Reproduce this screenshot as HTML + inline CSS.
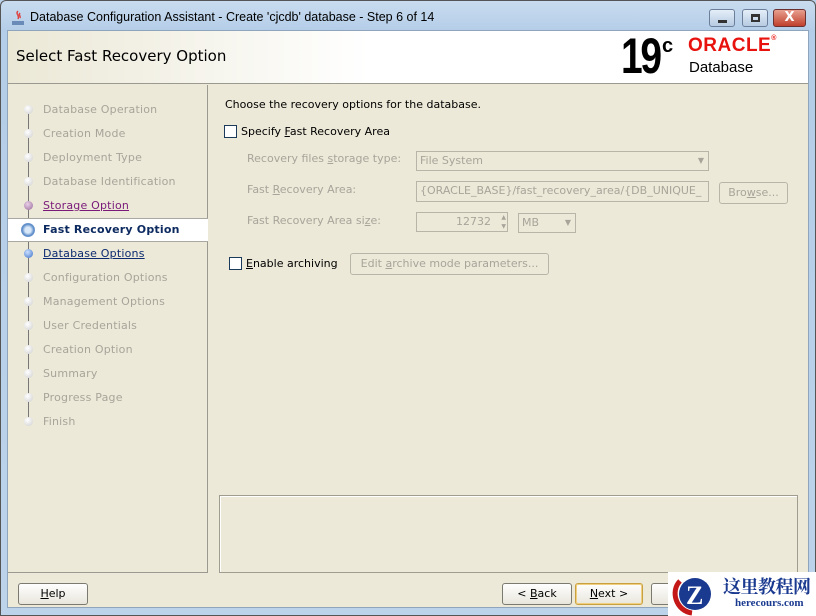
<!DOCTYPE html>
<html><head><meta charset="utf-8"><style>
*{margin:0;padding:0;box-sizing:border-box}
body{width:816px;height:616px;overflow:hidden;background:#b9d1ea;font-family:"DejaVu Sans","Liberation Sans",sans-serif;font-size:11px;position:relative}
.abs{position:absolute}
#frame{left:0;top:0;width:816px;height:616px;background:linear-gradient(#c9dcef,#b4cde8 30px,#bcd3ea);border:1px solid #555;border-radius:6px 6px 0 0}
#title{left:30px;top:10px;font-family:"Liberation Sans",sans-serif;font-size:12.5px;color:#000}
#client{left:7px;top:30px;width:802px;height:578px;background:#ece9d8;border:1px solid #8fa5bd}
#hdr{left:0;top:0;width:800px;height:53px;background:linear-gradient(90deg,#ebe8d6,#fff 45%);border-bottom:1px solid #9a9a90}
.st{position:absolute;left:35px;font-size:11px;color:#a8a49a;letter-spacing:.2px}
.dot{position:absolute;left:16px;width:9px;height:9px;border-radius:50%;background:radial-gradient(circle at 40% 35%,#fff,#ddd 70%,#bbb)}
.btn{position:absolute;height:22px;border:1px solid #7a7a70;border-radius:3px;background:linear-gradient(#fefefe,#e8e6dc);font-size:11px;text-align:center;line-height:20px;color:#000}
.dis{color:#a8a49a}
.box{position:absolute;border:1px solid #b8b5a8;background:#ece9d8;color:#a8a49a;font-size:11px;line-height:18px;padding-left:3px}
.cb{position:absolute;width:13px;height:13px;border:1px solid #1c3a5a;background:#fff}
</style></head><body>
<div id="frame" class="abs"></div>
<svg class="abs" style="left:10px;top:10px" width="16" height="16"><rect x="2" y="11" width="12" height="4" fill="#6a8ab8"/><path d="M8 1c-3 3 2 4 0 8M10 3c-2 2 1 3 0 5" stroke="#d44" fill="none" stroke-width="1.5"/></svg>
<div id="title" class="abs">Database Configuration Assistant - Create 'cjcdb' database - Step 6 of 14</div>
<div class="abs" style="left:709px;top:9px;width:26px;height:18px;border:1px solid #6b7f9b;border-radius:3px;background:linear-gradient(#e4eef8,#b7cbe2)"><div style="position:absolute;left:8px;top:10px;width:9px;height:3px;background:#333"></div></div>
<div class="abs" style="left:742px;top:9px;width:26px;height:18px;border:1px solid #6b7f9b;border-radius:3px;background:linear-gradient(#e4eef8,#b7cbe2)"><div style="position:absolute;left:8px;top:4px;width:9px;height:8px;border:2px solid #333;border-top-width:3px"></div></div>
<div class="abs" style="left:773px;top:9px;width:33px;height:18px;border:1px solid #6b3030;border-radius:3px;background:linear-gradient(#e8a090,#c0402c);color:#fff;font-weight:bold;text-align:center;line-height:16px;font-size:13px">X</div>
<div id="client" class="abs">
 <div id="hdr" class="abs">
  <div class="abs" style="left:8px;top:16px;font-size:15px;color:#000">Select Fast Recovery Option</div>
  <div class="abs" style="left:613px;top:-4px;font-family:'Liberation Sans',sans-serif;font-weight:bold;font-size:50px;letter-spacing:-3px;color:#000;transform:scaleX(.78);transform-origin:left">19</div>
  <div class="abs" style="left:654px;top:4px;font-family:'Liberation Sans',sans-serif;font-weight:bold;font-size:20px;color:#000">c</div>
  <div class="abs" style="left:680px;top:4px;font-family:'Liberation Sans',sans-serif;font-weight:bold;font-size:19px;color:#e8130f;letter-spacing:.5px">ORACLE<span style="font-size:7px;vertical-align:top">®</span></div>
  <div class="abs" style="left:681px;top:28px;font-family:'Liberation Sans',sans-serif;font-size:15px;color:#000">Database</div>
 </div>
 <div class="abs" style="left:0;top:54px;width:200px;height:488px;border-right:1px solid #9a9a90;border-bottom:1px solid #9a9a90"></div>
 <div class="abs" style="left:20px;top:74px;width:1px;height:320px;background:#777"></div>
 <div class="abs" style="left:0;top:187px;width:200px;height:24px;background:#fff;border-top:1px solid #a8a8a0;border-bottom:1px solid #a8a8a0"></div>
 <div class="dot" style="top:74px"></div><div class="st" style="top:72px">Database Operation</div>
 <div class="dot" style="top:98px"></div><div class="st" style="top:96px">Creation Mode</div>
 <div class="dot" style="top:122px"></div><div class="st" style="top:120px">Deployment Type</div>
 <div class="dot" style="top:146px"></div><div class="st" style="top:144px">Database Identification</div>
 <div class="dot" style="top:170px;background:radial-gradient(circle at 40% 35%,#e8d0e8,#9a6a9a)"></div><div class="st" style="top:168px;color:#7a1a7a;text-decoration:underline">Storage Option</div>
 <div class="dot" style="top:192px;left:13px;width:14px;height:14px;background:radial-gradient(circle,#d8e8f8 30%,#5a8ac8 60%,#b8d0ec)"></div><div class="st" style="top:192px;color:#0c2a60;font-weight:bold">Fast Recovery Option</div>
 <div class="dot" style="top:218px;background:radial-gradient(circle at 40% 35%,#cce0ff,#3a70c8)"></div><div class="st" style="top:216px;color:#0c2a70;text-decoration:underline">Database Options</div>
 <div class="dot" style="top:242px"></div><div class="st" style="top:240px">Configuration Options</div>
 <div class="dot" style="top:266px"></div><div class="st" style="top:264px">Management Options</div>
 <div class="dot" style="top:290px"></div><div class="st" style="top:288px">User Credentials</div>
 <div class="dot" style="top:314px"></div><div class="st" style="top:312px">Creation Option</div>
 <div class="dot" style="top:338px"></div><div class="st" style="top:336px">Summary</div>
 <div class="dot" style="top:362px"></div><div class="st" style="top:360px">Progress Page</div>
 <div class="dot" style="top:386px"></div><div class="st" style="top:384px">Finish</div>

 <div class="abs" style="left:217px;top:67px;color:#000">Choose the recovery options for the database.</div>
 <div class="cb" style="left:216px;top:94px"></div>
 <div class="abs" style="left:233px;top:94px;color:#000">Specify <u>F</u>ast Recovery Area</div>
 <div class="abs dis" style="left:239px;top:121px">Recovery files <u>s</u>torage type:</div>
 <div class="box" style="left:408px;top:120px;width:293px;height:20px">File System<span style="position:absolute;right:4px;font-size:8px">▼</span></div>
 <div class="abs dis" style="left:239px;top:152px">Fast <u>R</u>ecovery Area:</div>
 <div class="box" style="left:408px;top:150px;width:293px;height:21px;overflow:hidden;white-space:nowrap">{ORACLE_BASE}/fast_recovery_area/{DB_UNIQUE_</div>
 <div class="btn dis" style="left:711px;top:151px;width:69px;border-color:#b8b5a8;background:#ece9d8">Bro<u>w</u>se...</div>
 <div class="abs dis" style="left:239px;top:183px">Fast Recovery Area si<u>z</u>e:</div>
 <div class="box" style="left:408px;top:181px;width:92px;height:20px;text-align:right;padding-right:16px">12732<span style="position:absolute;right:1px;top:0;font-size:6px;line-height:9px">▲<br>▼</span></div>
 <div class="box" style="left:510px;top:182px;width:58px;height:20px">MB<span style="position:absolute;right:4px;font-size:8px">▼</span></div>
 <div class="cb" style="left:221px;top:226px"></div>
 <div class="abs" style="left:238px;top:226px;color:#000"><u>E</u>nable archiving</div>
 <div class="btn dis" style="left:342px;top:222px;width:199px;border-color:#b8b5a8;background:#ece9d8">Edit <u>a</u>rchive mode parameters...</div>
 <div class="abs" style="left:211px;top:464px;width:579px;height:78px;border:1px solid #a09d90;box-shadow:inset 1px 1px 0 #fff"></div>
 <div class="btn" style="left:10px;top:552px;width:70px"><u>H</u>elp</div>
 <div class="btn" style="left:494px;top:552px;width:70px">&lt; <u>B</u>ack</div>
 <div class="btn" style="left:567px;top:552px;width:68px;border-color:#c8a040;box-shadow:inset 0 0 0 1px #f0d080"><u>N</u>ext &gt;</div>
 <div class="btn" style="left:643px;top:552px;width:70px"></div>
</div>
<div class="abs" style="left:668px;top:572px;width:148px;height:44px;background:#fff"></div>
<svg class="abs" style="left:670px;top:573px" width="46" height="43"><path d="M10 8C0 18 6 38 22 40" stroke="#c41818" stroke-width="5" fill="none"/><circle cx="25" cy="21" r="16" fill="#1a3a90"/><text x="16" y="31" font-family="Liberation Serif" font-weight="bold" font-size="26" fill="#fff">Z</text></svg>
<div class="abs" style="left:723px;top:573px;font-family:'Noto Serif CJK SC',serif;font-weight:bold;font-size:18px;color:#1a3a90;letter-spacing:-0.5px">这里教程网</div>
<div class="abs" style="left:735px;top:597px;font-family:'Liberation Serif',serif;font-weight:bold;font-size:11px;color:#1a3a90">herecours.com</div>
</body></html>
